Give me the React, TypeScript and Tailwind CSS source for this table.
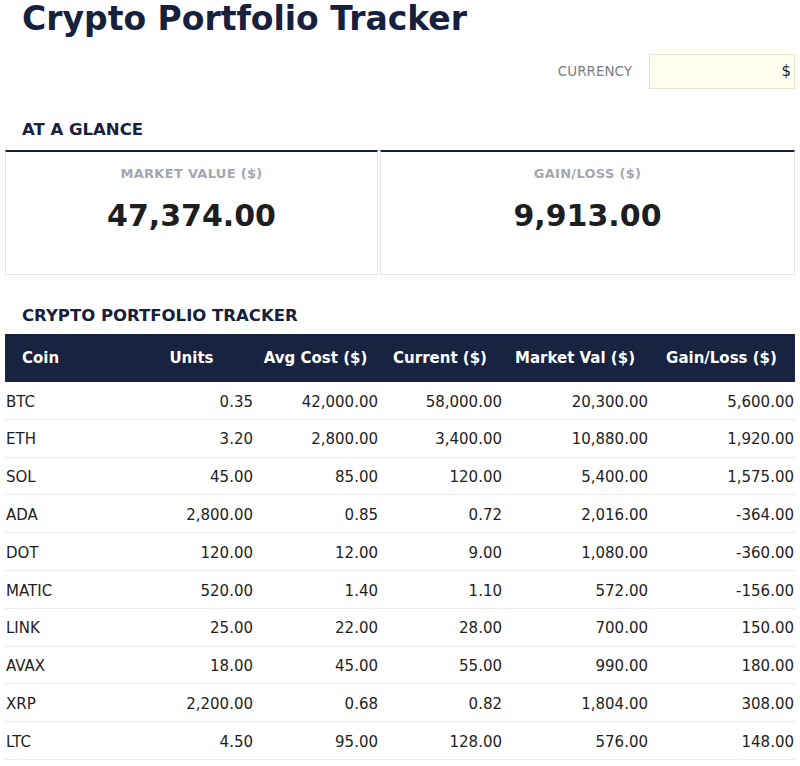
const holdings = [
  { coin: "BTC", units: "0.35", avg: "42,000.00", cur: "58,000.00", mkt: "20,300.00", gain: "5,600.00" },
  { coin: "ETH", units: "3.20", avg: "2,800.00", cur: "3,400.00", mkt: "10,880.00", gain: "1,920.00" },
  { coin: "SOL", units: "45.00", avg: "85.00", cur: "120.00", mkt: "5,400.00", gain: "1,575.00" },
  { coin: "ADA", units: "2,800.00", avg: "0.85", cur: "0.72", mkt: "2,016.00", gain: "-364.00" },
  { coin: "DOT", units: "120.00", avg: "12.00", cur: "9.00", mkt: "1,080.00", gain: "-360.00" },
  { coin: "MATIC", units: "520.00", avg: "1.40", cur: "1.10", mkt: "572.00", gain: "-156.00" },
  { coin: "LINK", units: "25.00", avg: "22.00", cur: "28.00", mkt: "700.00", gain: "150.00" },
  { coin: "AVAX", units: "18.00", avg: "45.00", cur: "55.00", mkt: "990.00", gain: "180.00" },
  { coin: "XRP", units: "2,200.00", avg: "0.68", cur: "0.82", mkt: "1,804.00", gain: "308.00" },
  { coin: "LTC", units: "4.50", avg: "95.00", cur: "128.00", mkt: "576.00", gain: "148.00" },
];

const cols = "grid grid-cols-[125px_123px_125px_124px_146px_1fr]";

function Stat({ label, value }: { label: string; value: string }) {
  return (
    <div className="h-[125px] border-t-2 border-t-[#16213e] border-x border-b border-[#e3e4e8] flex flex-col items-center pt-[14px]">
      <div className="text-[13px] leading-[15px] font-bold tracking-[0.3px] text-[#a3a7b2]">{label}</div>
      <div className="mt-[17px] text-[30px] leading-[35px] font-bold text-[#1d1e22]">{value}</div>
    </div>
  );
}

export default function App() {
  return (
    <div className="min-h-screen bg-white px-[5px] font-['DejaVu_Sans',sans-serif] text-[#1d1e22]">
      <h1 className="pl-[17px] text-[33px] leading-[38px] font-bold text-[#16213e]">Crypto Portfolio Tracker</h1>

      <div className="mt-[16px] flex items-center justify-end gap-[17px]">
        <span className="text-[13.5px] text-[#7a7d84]">CURRENCY</span>
        <div className="w-[146px] h-[35px] bg-[#fffcf0] border border-[#ebe4c6] flex items-center justify-end pr-[3px] text-[15px]">
          $
        </div>
      </div>

      <h2 className="mt-[31px] pl-[17px] text-[16.5px] leading-[20px] font-bold text-[#16213e]">AT A GLANCE</h2>
      <div className="mt-[10px] grid grid-cols-[373px_1fr] gap-[2px]">
        <Stat label="MARKET VALUE ($)" value="47,374.00" />
        <Stat label="GAIN/LOSS ($)" value="9,913.00" />
      </div>

      <h2 className="mt-[31px] pl-[17px] text-[16.5px] leading-[20px] font-bold text-[#16213e]">CRYPTO PORTFOLIO TRACKER</h2>
      <div className="mt-[8px] text-[15px]">
        <div className={`${cols} h-[48px] items-center bg-[#172340] text-white font-bold`}>
          <div className="pl-[17px]">Coin</div>
          <div className="text-center">Units</div>
          <div className="text-center">Avg Cost ($)</div>
          <div className="text-center">Current ($)</div>
          <div className="text-center">Market Val ($)</div>
          <div className="text-center">Gain/Loss ($)</div>
        </div>
        {holdings.map((h) => (
          <div key={h.coin} className={`${cols} h-[37.8px] pt-[3px] items-center border-b border-[#ebebee]`}>
            <div className="pl-[1px]">{h.coin}</div>
            <div className="text-right">{h.units}</div>
            <div className="text-right">{h.avg}</div>
            <div className="text-right">{h.cur}</div>
            <div className="text-right">{h.mkt}</div>
            <div className="text-right pr-[1px]">{h.gain}</div>
          </div>
        ))}
      </div>
    </div>
  );
}
